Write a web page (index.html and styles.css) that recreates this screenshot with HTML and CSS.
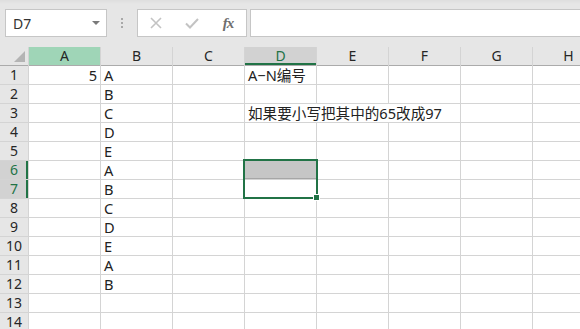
FILE: index.html
```
<!DOCTYPE html>
<html lang="zh-CN">
<head>
    <meta charset="UTF-8">
    <meta name="viewport" content="width=device-width, initial-scale=1.0">
    <title>Sheet1</title>
    <link rel="stylesheet" href="styles.css">
</head>
<body>
    <div class="toolbar">
        <div class="namebox">
            <span>D7</span>
            <span class="caret"></span>
        </div>
        <div class="grip"><i></i><i></i><i></i></div>
        <div class="fxbox">
            <span class="fxbtn">
                <svg width="12" height="12" viewBox="0 0 12 12"><path d="M1 1L11 11M11 1L1 11" stroke="#c3c3c3" stroke-width="1.6" fill="none"/></svg>
            </span>
            <span class="fxbtn">
                <svg width="14" height="12" viewBox="0 0 14 12"><path d="M1 6.5L5 10.5L13 2" stroke="#c3c3c3" stroke-width="2" fill="none"/></svg>
            </span>
            <span class="fxbtn fx">fx</span>
        </div>
        <div class="formula"></div>
    </div>

    <div class="sheet">
        <div class="corner"><span class="tri"></span></div>
        <div class="colhead picked">A</div>
        <div class="colhead">B</div>
        <div class="colhead">C</div>
        <div class="colhead active">D</div>
        <div class="colhead">E</div>
        <div class="colhead">F</div>
        <div class="colhead">G</div>
        <div class="colhead">H</div>

        <div class="rowhead">1</div>
        <div class="cell num">5</div><div class="cell">A</div><div class="cell"></div>
        <div class="cell">A−N编号</div><div class="cell"></div><div class="cell"></div><div class="cell"></div><div class="cell"></div>

        <div class="rowhead">2</div>
        <div class="cell"></div><div class="cell">B</div><div class="cell"></div>
        <div class="cell"></div><div class="cell"></div><div class="cell"></div><div class="cell"></div><div class="cell"></div>

        <div class="rowhead">3</div>
        <div class="cell"></div><div class="cell">C</div><div class="cell"></div>
        <div class="cell wide">如果要小写把其中的65改成97</div><div class="cell"></div><div class="cell"></div>

        <div class="rowhead">4</div>
        <div class="cell"></div><div class="cell">D</div><div class="cell"></div>
        <div class="cell"></div><div class="cell"></div><div class="cell"></div><div class="cell"></div><div class="cell"></div>

        <div class="rowhead">5</div>
        <div class="cell"></div><div class="cell">E</div><div class="cell"></div>
        <div class="cell"></div><div class="cell"></div><div class="cell"></div><div class="cell"></div><div class="cell"></div>

        <div class="rowhead active">6</div>
        <div class="cell"></div><div class="cell">A</div><div class="cell"></div>
        <div class="cell shaded"></div><div class="cell"></div><div class="cell"></div><div class="cell"></div><div class="cell"></div>

        <div class="rowhead active">7</div>
        <div class="cell"></div><div class="cell">B</div><div class="cell"></div>
        <div class="cell"></div><div class="cell"></div><div class="cell"></div><div class="cell"></div><div class="cell"></div>

        <div class="rowhead">8</div>
        <div class="cell"></div><div class="cell">C</div><div class="cell"></div>
        <div class="cell"></div><div class="cell"></div><div class="cell"></div><div class="cell"></div><div class="cell"></div>

        <div class="rowhead">9</div>
        <div class="cell"></div><div class="cell">D</div><div class="cell"></div>
        <div class="cell"></div><div class="cell"></div><div class="cell"></div><div class="cell"></div><div class="cell"></div>

        <div class="rowhead">10</div>
        <div class="cell"></div><div class="cell">E</div><div class="cell"></div>
        <div class="cell"></div><div class="cell"></div><div class="cell"></div><div class="cell"></div><div class="cell"></div>

        <div class="rowhead">11</div>
        <div class="cell"></div><div class="cell">A</div><div class="cell"></div>
        <div class="cell"></div><div class="cell"></div><div class="cell"></div><div class="cell"></div><div class="cell"></div>

        <div class="rowhead">12</div>
        <div class="cell"></div><div class="cell">B</div><div class="cell"></div>
        <div class="cell"></div><div class="cell"></div><div class="cell"></div><div class="cell"></div><div class="cell"></div>

        <div class="rowhead">13</div>
        <div class="cell"></div><div class="cell"></div><div class="cell"></div>
        <div class="cell"></div><div class="cell"></div><div class="cell"></div><div class="cell"></div><div class="cell"></div>

        <div class="rowhead">14</div>
        <div class="cell"></div><div class="cell"></div><div class="cell"></div>
        <div class="cell"></div><div class="cell"></div><div class="cell"></div><div class="cell"></div><div class="cell"></div>

        <div class="selection"><span class="handle"></span></div>
    </div>
</body>
</html>
```

FILE: styles.css
```
body {
    margin: 0;
    width: 580px;
    height: 329px;
    overflow: hidden;
    background-color: #e6e6e6;
    font-family: "Noto Sans", "Noto Sans CJK SC", sans-serif;
    color: #222222;
}
.toolbar {
    display: flex;
    align-items: flex-start;
    height: 47px;
    padding-top: 9px;
    padding-left: 5px;
    box-sizing: border-box;
    background: linear-gradient(#dedede 0, #e6e6e6 4px);
}
.namebox {
    display: flex;
    align-items: center;
    justify-content: space-between;
    width: 102px;
    height: 28px;
    box-sizing: border-box;
    padding: 0 6px 0 7px;
    background-color: #ffffff;
    border: 1px solid #c6c6c6;
    font-size: 14px;
    color: #333333;
}
.caret {
    width: 0;
    height: 0;
    border-left: 4px solid transparent;
    border-right: 4px solid transparent;
    border-top: 4px solid #7a7a7a;
}
.grip {
    display: flex;
    flex-direction: column;
    align-items: center;
    gap: 2px;
    width: 30px;
    padding-top: 9px;
}
.grip i {
    display: block;
    width: 2px;
    height: 2px;
    background-color: #a8a8a8;
}
.fxbox {
    display: flex;
    width: 110px;
    height: 28px;
    box-sizing: border-box;
    background-color: #ffffff;
    border: 1px solid #c6c6c6;
}
.fxbtn {
    display: flex;
    align-items: center;
    justify-content: center;
    width: 36px;
    height: 26px;
}
.fx {
    font-family: "Liberation Serif", serif;
    font-style: italic;
    font-weight: bold;
    font-size: 15px;
    color: #6e6e6e;
    letter-spacing: -1px;
}
.formula {
    flex: 1;
    height: 28px;
    margin-left: 3px;
    margin-right: -5px;
    box-sizing: border-box;
    background-color: #ffffff;
    border: 1px solid #c6c6c6;
}
.sheet {
    position: relative;
    display: grid;
    grid-template-columns: 28px repeat(8, 71px);
    grid-auto-rows: 18px;
    gap: 1px;
    background-color: #d4d4d4;
    font-size: 14px;
    line-height: 18px;
}
.corner {
    position: relative;
    background-color: #e6e6e6;
    box-shadow: 0 1px 0 #ababab;
}
.tri {
    position: absolute;
    right: 3px;
    bottom: 3px;
    width: 0;
    height: 0;
    border-left: 11px solid transparent;
    border-bottom: 11px solid #b4b4b4;
}
.colhead {
    background-color: #e6e6e6;
    text-align: center;
    color: #262626;
    box-shadow: 0 1px 0 #ababab;
}
.colhead.picked {
    background-color: #9fd5b7;
}
.colhead.active {
    background-color: #d2d2d2;
    color: #217346;
    box-shadow: inset 0 -2px 0 #217346, 0 1px 0 #ababab;
}
.rowhead {
    background-color: #e6e6e6;
    text-align: center;
    color: #262626;
}
.rowhead.active {
    background-color: #d2d2d2;
    color: #217346;
    box-shadow: inset -2px 0 0 #217346;
}
.cell {
    background-color: #ffffff;
    padding-left: 3px;
    font-size: 14.6px;
    white-space: nowrap;
    overflow: hidden;
}
.cell.num {
    text-align: right;
    padding-right: 3px;
    padding-left: 0;
}
.cell.wide {
    grid-column: span 3;
}
.cell.shaded {
    background-color: #c6c6c6;
    box-shadow: inset 0 -1px 0 #a6a6a6;
}
.selection {
    position: absolute;
    left: 243px;
    top: 112px;
    width: 75px;
    height: 40px;
    box-sizing: border-box;
    border: 2px solid #217346;
}
.handle {
    position: absolute;
    right: -4px;
    bottom: -4px;
    width: 5px;
    height: 5px;
    background-color: #217346;
    border: 1px solid #ffffff;
}
```
